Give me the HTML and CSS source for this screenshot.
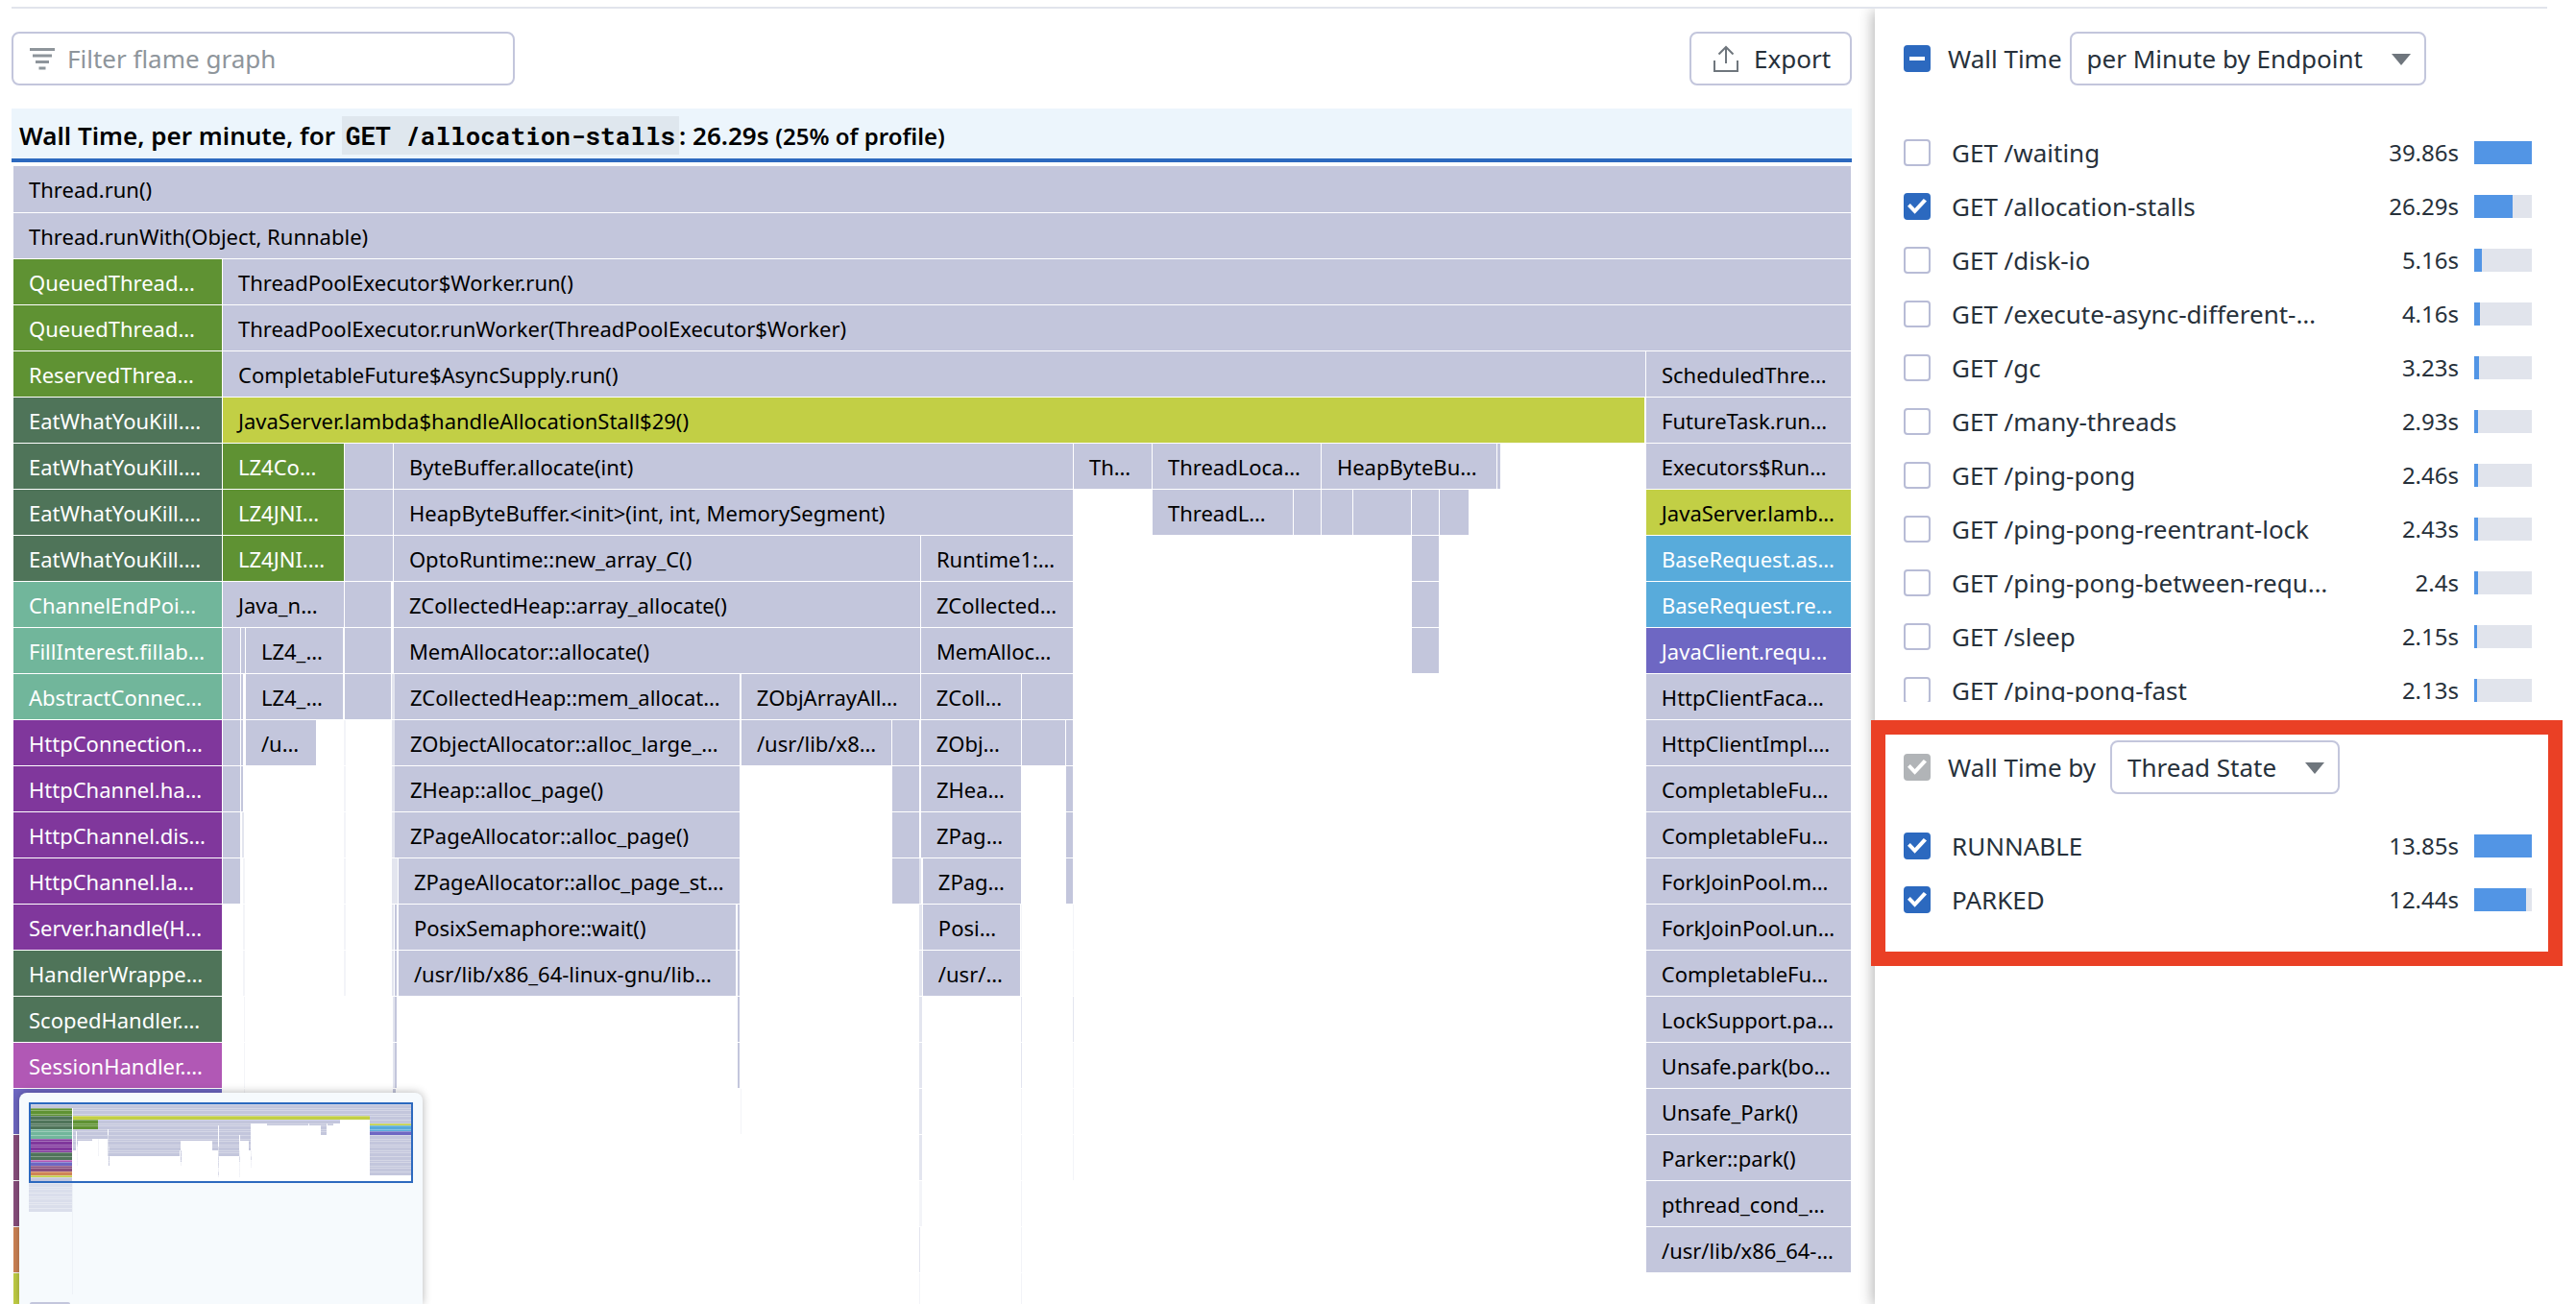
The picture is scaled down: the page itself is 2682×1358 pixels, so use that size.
FILE: index.html
```html
<!DOCTYPE html>
<html lang="en">
<head>
<meta charset="utf-8">
<meta name="viewport" content="width=device-width, initial-scale=1">
<title>Profile – Wall Time</title>
<link rel="stylesheet" href="styles.css">
</head>
<body>
<div class="layout">
  <main class="profile">
    <div class="toolbar">
      <label class="filter">
        <svg class="filter-icon" viewBox="0 0 28 24" aria-hidden="true"><path d="M1 2.500h26M4 9h20M7 15.500h14M10.500 22h7"/></svg>
        <input type="text" placeholder="Filter flame graph" aria-label="Filter flame graph">
      </label>
      <button class="export" type="button">
        <svg class="export-icon" viewBox="0 0 28 30" aria-hidden="true"><path d="M2 17v11h24V17M14 20V3M6.500 10.500L14 3l7.500 7.500"/></svg>
        Export
      </button>
    </div>
    <h1 class="summary">Wall Time, per minute, for <code>GET /allocation-stalls</code>: 26.29s <small>(25% of profile)</small></h1>
    <div class="flame" id="flame"></div>
    <div class="minimap">
      <svg id="minimap" class="minimap-canvas" viewBox="0 0 400 200" aria-hidden="true"></svg>
      <div class="minimap-handle"></div>
    </div>
  </main>

  <aside class="sidebar">
    <section class="endpoints">
      <div class="group-head">
        <input type="checkbox" id="all-endpoints">
        <label for="all-endpoints">Wall Time</label>
        <span class="picker picker-wide">
          <select aria-label="Wall time breakdown"><option>per Minute by Endpoint</option></select>
          <svg viewBox="0 0 20 12" aria-hidden="true"><path d="M0 0h20L10 12z"/></svg>
        </span>
      </div>
      <ul class="metrics metrics-scroll" id="endpoints"></ul>
    </section>
    <section class="states">
      <div class="group-head">
        <input type="checkbox" id="all-states" checked disabled>
        <label for="all-states">Wall Time by</label>
        <span class="picker picker-narrow">
          <select aria-label="Wall time grouping"><option>Thread State</option></select>
          <svg viewBox="0 0 20 12" aria-hidden="true"><path d="M0 0h20L10 12z"/></svg>
        </span>
      </div>
      <ul class="metrics" id="states"></ul>
    </section>
  </aside>
</div>
<script src="app.js"></script>
</body>
</html>
```
FILE: styles.css
```css
* { box-sizing: border-box; }

body {
  margin: 0;
  height: 100vh;
  padding-top: 7px;
  overflow: hidden;
  background: #fff;
  color: #27313b;
  font: 26px/36px "Noto Sans", sans-serif;
}

.layout {
  position: relative;
  height: 100%;
  display: grid;
  grid-template-columns: minmax(0, 1fr) 730px;
  padding-top: 2px;
}

.layout::before {
  content: "";
  position: absolute;
  top: 0;
  left: 12px;
  right: 30px;
  height: 2px;
  background: #e1e4ec;
}

/* Main column */

.profile {
  position: relative;
  display: flex;
  flex-direction: column;
  min-height: 0;
  padding: 24px 24px 0 12px;
  overflow: hidden;
}

.toolbar {
  display: flex;
  justify-content: space-between;
  margin-bottom: 24px;
}

.filter, .export {
  display: flex;
  align-items: center;
  height: 56px;
  border: 2px solid #c3c6dc;
  border-radius: 8px;
  background: #fff;
}

.filter { width: 524px; padding: 0 16px; gap: 12px; }
.filter-icon { width: 28px; height: 24px; fill: none; stroke: #8e959b; stroke-width: 3; }

.filter input {
  flex: 1;
  min-width: 0;
  height: 36px;
  padding: 0;
  border: 0;
  outline: 0;
  font: inherit;
  color: inherit;
}

.filter input::placeholder { color: #8e959b; opacity: 1; }

.export {
  width: 169px;
  padding: 0 0 0 22px;
  gap: 15px;
  font: inherit;
  color: inherit;
}

.export-icon { width: 28px; height: 30px; fill: none; stroke: #6f767d; stroke-width: 2; }

.summary {
  flex: none;
  height: 56px;
  margin: 0 0 4px;
  padding: 0 8px;
  border-bottom: 4px solid #2c69bf;
  background: #ecf5fc;
  color: #000;
  font-size: 26px;
  font-weight: 600;
  line-height: 56px;
  white-space: nowrap;
}

.summary code {
  padding: 3px 4px;
  background: #dfe7ee;
  font: 700 26px/30px "Roboto Mono", "Liberation Mono", monospace;
}

.summary small { font-size: 24px; }

.flame {
  flex: 1;
  min-height: 0;
  margin: 0 1px 0 2px;
  overflow: hidden;
}

.flame-row { display: flex; height: 48px; padding-bottom: 1px; }
.flame-row:first-child { height: 49px; }

.frame {
  flex: none;
  overflow: hidden;
  color: #000;
  font-size: 22px;
  line-height: 49px;
  white-space: nowrap;
}

.frame-label { padding-left: 16px; }

.frame-lav { background: #c3c6dc; }
.frame-pale { background: #e3e5ef; }
.frame-faint { background: #f3f4f8; }
.frame-lime { background: #c2cf45; }
.frame-green { background: #5f9233; color: #fff; }
.frame-forest { background: #4f7459; color: #fff; }
.frame-teal { background: #71b69b; color: #fff; }
.frame-purple { background: #80379c; color: #fff; }
.frame-pink { background: #b158b5; color: #fff; }
.frame-indigo { background: #6e67c3; color: #fff; }
.frame-plum { background: #8a4f7e; color: #fff; }
.frame-orange { background: #cf8456; color: #fff; }
.frame-blue { background: #58abdb; color: #fff; }

/* Overview floating over the flame graph */

.minimap {
  position: absolute;
  left: 20px;
  bottom: 0;
  width: 420px;
  height: 220px;
  padding: 10px 10px 0;
  border-radius: 8px 8px 0 0;
  background: #f6fafd;
  box-shadow: 0 0 10px rgba(0, 0, 0, .3);
}

.minimap-canvas { display: block; width: 400px; height: 200px; }

.minimap-handle {
  width: 42px;
  height: 2px;
  margin: 8px 0 0 1px;
  border-radius: 4px 4px 0 0;
  background: #c3c6dc;
}

/* Sidebar */

.sidebar {
  position: relative;
  padding-top: 24px;
  background: #fff;
  box-shadow: -2px 2px 14px rgba(0, 0, 0, .3);
  clip-path: inset(0 0 0 -24px);
}

.endpoints { padding: 0 46px 0 30px; }

.states {
  margin: 19px 14px 0 -4px;
  padding: 6px 17px 26px 19px;
  border: 15px solid #ea4025;
}

.group-head { display: flex; align-items: center; height: 56px; }
.group-head label { margin: 0 8px 0 18px; }
.states .group-head label { margin-right: 15px; }

.picker { display: grid; align-items: center; height: 56px; }
.picker-wide { width: 371px; }
.picker-narrow { width: 239px; }
.picker select, .picker svg { grid-area: 1 / 1; }

.picker select {
  appearance: none;
  width: 100%;
  height: 56px;
  padding: 0 48px 0 16px;
  border: 2px solid #c3c6dc;
  border-radius: 8px;
  background: #fff;
  color: inherit;
  font: inherit;
}

.picker svg {
  justify-self: end;
  width: 20px;
  height: 12px;
  margin: 2px 16px 0 0;
  fill: #6f767d;
  pointer-events: none;
}

input[type="checkbox"] {
  appearance: none;
  display: grid;
  place-items: center;
  flex: none;
  width: 28px;
  height: 28px;
  margin: 0;
  border: 2px solid #b8bcd6;
  border-radius: 4px;
  background: #fff;
}

input[type="checkbox"]:checked,
input[type="checkbox"]:indeterminate { border-color: #2c69bf; background: #2c69bf; }
input[type="checkbox"]:disabled { border-color: #b1b4b7; background: #b1b4b7; }

input[type="checkbox"]:checked::before {
  content: "";
  width: 20px;
  height: 16px;
  background: #fff;
  clip-path: polygon(0 48%, 14% 32%, 38% 62%, 84% 0, 100% 16%, 38% 98%);
}

input[type="checkbox"]:indeterminate::before {
  content: "";
  width: 16px;
  height: 4px;
  background: #fff;
}

.metrics { margin: 0; padding: 0; list-style: none; }
.endpoints .metrics { margin-top: 42px; }
.states .metrics { margin-top: 26px; }
.metrics-scroll { height: 600px; overflow: hidden; }

.metric { display: flex; align-items: center; height: 56px; }

.metric label {
  flex: 1;
  padding-left: 22px;
  white-space: nowrap;
}

.metric-value { padding-right: 16px; font-size: 24px; }
.metric-bar { width: 60px; height: 24px; background: #e1e4ec; }
.metric-fill { height: 100%; background: #5295e5; }
```
FILE: app.js
```js
// Frames are [start, end, colour, label] on a time axis that runs from 14 to 1927.
const AXIS_START = 14;
const AXIS_LENGTH = 1913;

const rows = [
  [[14, 1927, 'lav', 'Thread.run()']],
  [[14, 1927, 'lav', 'Thread.runWith(Object, Runnable)']],
  [[14, 231, 'green', 'QueuedThread…'], [232, 1927, 'lav', 'ThreadPoolExecutor$Worker.run()']],
  [[14, 231, 'green', 'QueuedThread…'], [232, 1927, 'lav', 'ThreadPoolExecutor.runWorker(ThreadPoolExecutor$Worker)']],
  [[14, 231, 'green', 'ReservedThrea…'], [232, 1713, 'lav', 'CompletableFuture$AsyncSupply.run()'], [1714, 1927, 'lav', 'ScheduledThre…']],
  [[14, 231, 'forest', 'EatWhatYouKill.…'], [232, 1712, 'lime', 'JavaServer.lambda$handleAllocationStall$29()'], [1714, 1927, 'lav', 'FutureTask.run…']],
  [[14, 231, 'forest', 'EatWhatYouKill.…'], [232, 358, 'green', 'LZ4Co…'], [359, 409, 'lav'], [410, 1117, 'lav', 'ByteBuffer.allocate(int)'], [1118, 1199, 'lav', 'Th…'], [1200, 1375, 'lav', 'ThreadLoca…'], [1376, 1558, 'lav', 'HeapByteBu…'], [1559, 1562, 'lav'], [1714, 1927, 'lav', 'Executors$Run…']],
  [[14, 231, 'forest', 'EatWhatYouKill.…'], [232, 358, 'green', 'LZ4JNI…'], [359, 409, 'lav'], [410, 1117, 'lav', 'HeapByteBuffer.<init>(int, int, MemorySegment)'], [1200, 1346, 'lav', 'ThreadL…'], [1347, 1375, 'lav'], [1376, 1408, 'lav'], [1409, 1469, 'lav'], [1470, 1498, 'lav'], [1499, 1529, 'lav'], [1714, 1927, 'lime', 'JavaServer.lamb…']],
  [[14, 231, 'forest', 'EatWhatYouKill.…'], [232, 358, 'green', 'LZ4JNI.…'], [359, 409, 'lav'], [410, 958, 'lav', 'OptoRuntime::new_array_C()'], [959, 1117, 'lav', 'Runtime1:…'], [1470, 1498, 'lav'], [1714, 1927, 'blue', 'BaseRequest.as…']],
  [[14, 231, 'teal', 'ChannelEndPoi…'], [232, 358, 'lav', 'Java_n…'], [359, 407, 'lav'], [410, 958, 'lav', 'ZCollectedHeap::array_allocate()'], [959, 1117, 'lav', 'ZCollected…'], [1470, 1498, 'lav'], [1714, 1927, 'blue', 'BaseRequest.re…']],
  [[14, 231, 'teal', 'FillInterest.fillab…'], [232, 250, 'lav'], [251, 255, 'lav'], [256, 357, 'lav', 'LZ4_…'], [359, 407, 'lav'], [410, 958, 'lav', 'MemAllocator::allocate()'], [959, 1117, 'lav', 'MemAlloc…'], [1470, 1498, 'lav'], [1714, 1927, 'indigo', 'JavaClient.requ…']],
  [[14, 231, 'teal', 'AbstractConnec…'], [232, 250, 'lav'], [251, 253, 'lav'], [256, 357, 'lav', 'LZ4_…'], [359, 407, 'lav'], [408, 411, 'pale'], [411, 770, 'lav', 'ZCollectedHeap::mem_allocat…'], [772, 958, 'lav', 'ZObjArrayAll…'], [959, 1063, 'lav', 'ZColl…'], [1064, 1117, 'lav'], [1714, 1927, 'lav', 'HttpClientFaca…']],
  [[14, 231, 'purple', 'HttpConnection…'], [232, 250, 'lav'], [251, 253, 'lav'], [256, 329, 'lav', '/u…'], [358, 360, 'faint'], [408, 411, 'pale'], [411, 770, 'lav', 'ZObjectAllocator::alloc_large_…'], [772, 928, 'lav', '/usr/lib/x8…'], [929, 957, 'lav'], [959, 1063, 'lav', 'ZObj…'], [1064, 1109, 'lav'], [1110, 1117, 'lav'], [1714, 1927, 'lav', 'HttpClientImpl.…']],
  [[14, 231, 'purple', 'HttpChannel.ha…'], [232, 250, 'lav'], [251, 253, 'lav'], [358, 360, 'faint'], [408, 411, 'pale'], [411, 770, 'lav', 'ZHeap::alloc_page()'], [929, 957, 'lav'], [959, 1063, 'lav', 'ZHea…'], [1110, 1117, 'lav'], [1714, 1927, 'lav', 'CompletableFu…']],
  [[14, 231, 'purple', 'HttpChannel.dis…'], [232, 250, 'lav'], [252, 254, 'pale'], [358, 360, 'faint'], [408, 411, 'pale'], [411, 770, 'lav', 'ZPageAllocator::alloc_page()'], [929, 957, 'lav'], [959, 1063, 'lav', 'ZPag…'], [1110, 1117, 'lav'], [1714, 1927, 'lav', 'CompletableFu…']],
  [[14, 231, 'purple', 'HttpChannel.la…'], [232, 250, 'lav'], [253, 255, 'faint'], [358, 360, 'faint'], [408, 414, 'pale'], [415, 770, 'lav', 'ZPageAllocator::alloc_page_st…'], [929, 957, 'lav'], [957, 959, 'pale'], [961, 1063, 'lav', 'ZPag…'], [1110, 1117, 'lav'], [1714, 1927, 'lav', 'ForkJoinPool.m…']],
  [[14, 231, 'purple', 'Server.handle(H…'], [253, 255, 'faint'], [358, 360, 'faint'], [408, 410, 'pale'], [411, 413, 'lav'], [415, 766, 'lav', 'PosixSemaphore::wait()'], [768, 770, 'lav'], [957, 960, 'pale'], [961, 1062, 'lav', 'Posi…'], [1063, 1064, 'faint'], [1117, 1118, 'faint'], [1714, 1927, 'lav', 'ForkJoinPool.un…']],
  [[14, 231, 'forest', 'HandlerWrappe…'], [253, 255, 'faint'], [358, 360, 'faint'], [408, 410, 'pale'], [411, 413, 'lav'], [415, 766, 'lav', '/usr/lib/x86_64-linux-gnu/lib…'], [768, 770, 'lav'], [957, 960, 'pale'], [961, 1062, 'lav', '/usr/…'], [1063, 1064, 'faint'], [1117, 1118, 'faint'], [1714, 1927, 'lav', 'CompletableFu…']],
  [[14, 231, 'forest', 'ScopedHandler.…'], [254, 255, 'faint'], [409, 411, 'pale'], [411, 413, 'lav'], [768, 770, 'lav'], [957, 960, 'pale'], [1063, 1064, 'pale'], [1117, 1118, 'pale'], [1714, 1927, 'lav', 'LockSupport.pa…']],
  [[14, 231, 'pink', 'SessionHandler.…'], [254, 255, 'faint'], [409, 411, 'pale'], [411, 413, 'lav'], [768, 770, 'lav'], [957, 960, 'pale'], [1063, 1064, 'pale'], [1117, 1118, 'faint'], [1714, 1927, 'lav', 'Unsafe.park(bo…']],
  [[14, 231, 'indigo'], [254, 255, 'faint'], [409, 412, 'lav'], [771, 772, 'faint'], [957, 960, 'pale'], [1063, 1064, 'faint'], [1117, 1118, 'faint'], [1714, 1927, 'lav', 'Unsafe_Park()']],
  [[14, 231, 'plum'], [957, 960, 'pale'], [1063, 1064, 'faint'], [1117, 1118, 'faint'], [1714, 1927, 'lav', 'Parker::park()']],
  [[14, 231, 'plum'], [957, 960, 'faint'], [1063, 1064, 'faint'], [1714, 1927, 'lav', 'pthread_cond_…']],
  [[14, 231, 'orange'], [957, 958, 'pale'], [1063, 1064, 'faint'], [1714, 1927, 'lav', '/usr/lib/x86_64-…']],
  [[14, 231, 'lime'], [957, 958, 'faint'], [1063, 1064, 'faint']]
];
for (let i = 0; i < 11; i++) rows.push([[14, 231, 'lav']]);

const percent = (length) => (length / AXIS_LENGTH * 100) + '%';

const flame = document.getElementById('flame');
for (const row of rows.slice(0, 25)) {
  const line = document.createElement('div');
  line.className = 'flame-row';
  let cursor = AXIS_START;
  for (const [start, end, colour, label] of row) {
    const frame = document.createElement('div');
    frame.className = 'frame frame-' + colour + (label ? ' frame-label' : '');
    frame.style.marginLeft = percent(start - cursor);
    frame.style.width = percent(end - start);
    if (label) frame.textContent = label;
    line.append(frame);
    cursor = end;
  }
  flame.append(line);
}

// Overview: the visible window is 84 high, everything below it is faded.
const map = document.getElementById('minimap');
const WINDOW = 84;
function rect(x, y, width, height, fill, opacity) {
  const el = document.createElementNS('http://www.w3.org/2000/svg', 'rect');
  const attrs = { x, y, width, height, fill, opacity, 'shape-rendering': 'crispEdges' };
  for (const name in attrs) el.setAttribute(name, attrs[name]);
  map.append(el);
  return el;
}
const rowTop = (i) => 2 * Math.floor(i * 19 / 12);
const palette = {
  lav: '#c3c6dc', pale: '#d9dbe8', faint: '#f1f2f7', lime: '#c2cf45', green: '#5f9233', forest: '#4f7459',
  teal: '#71b69b', purple: '#80379c', pink: '#b158b5', indigo: '#6e67c3', plum: '#8a4f7e',
  orange: '#cf8456', blue: '#58abdb'
};
rect(0, 0, 400, WINDOW, '#fff', 1);
rows.forEach((row, i) => {
  const top = rowTop(i);
  const height = rowTop(i + 1) - top;
  const opacity = top >= WINDOW ? 0.55 : 1;
  for (const [start, end, colour] of row) {
    const x = Math.round((start - AXIS_START) * 400 / AXIS_LENGTH);
    const width = Math.max(1, Math.round((end - AXIS_START) * 400 / AXIS_LENGTH) - x);
    rect(x, top, width, height, palette[colour], opacity);
    rect(x, top, width, 1, '#fff', 0.3);
  }
});
rect(45, WINDOW, 1, 116, '#eef2f7', 1);
const outline = rect(1, 1, 398, WINDOW - 2, 'none', 1);
outline.setAttribute('stroke', '#2c69bf');
outline.setAttribute('stroke-width', 2);

// Sidebar lists
function fillList(id, items, max) {
  const list = document.getElementById(id);
  items.forEach(([name, seconds, checked], i) => {
    const item = document.createElement('li');
    item.className = 'metric';
    const box = document.createElement('input');
    box.type = 'checkbox';
    box.id = id + '-' + i;
    box.checked = Boolean(checked);
    const label = document.createElement('label');
    label.htmlFor = box.id;
    label.textContent = name;
    const value = document.createElement('span');
    value.className = 'metric-value';
    value.textContent = seconds + 's';
    const bar = document.createElement('div');
    bar.className = 'metric-bar';
    const fill = document.createElement('div');
    fill.className = 'metric-fill';
    fill.style.width = (seconds / max * 100) + '%';
    bar.append(fill);
    item.append(box, label, value, bar);
    list.append(item);
  });
}

fillList('endpoints', [
  ['GET /waiting', 39.86],
  ['GET /allocation-stalls', 26.29, true],
  ['GET /disk-io', 5.16],
  ['GET /execute-async-different-…', 4.16],
  ['GET /gc', 3.23],
  ['GET /many-threads', 2.93],
  ['GET /ping-pong', 2.46],
  ['GET /ping-pong-reentrant-lock', 2.43],
  ['GET /ping-pong-between-requ…', 2.4],
  ['GET /sleep', 2.15],
  ['GET /ping-pong-fast', 2.13]
], 39.86);

fillList('states', [
  ['RUNNABLE', 13.85, true],
  ['PARKED', 12.44, true]
], 13.85);

document.getElementById('all-endpoints').indeterminate = true;
```
